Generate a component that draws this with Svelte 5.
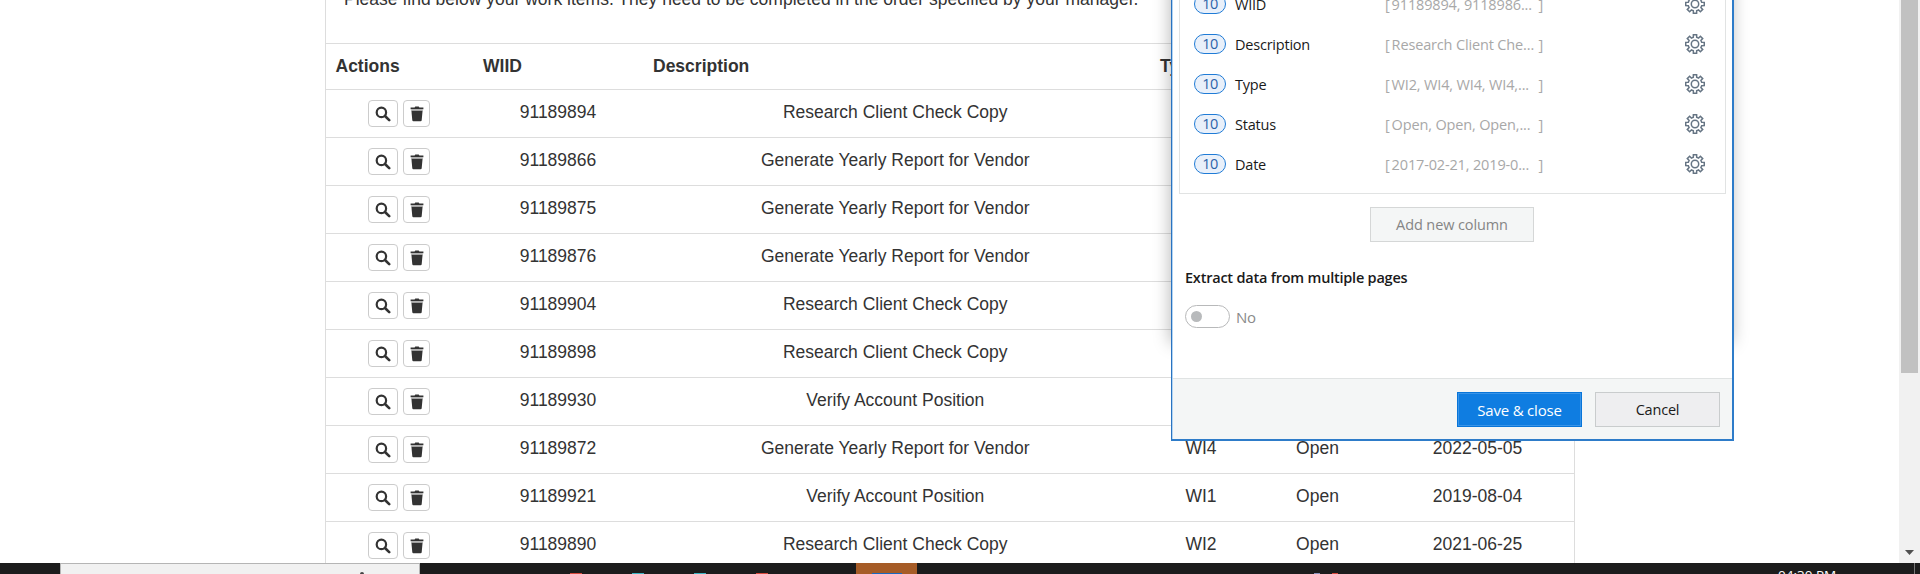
<script>
  const rows = [
    ['91189894', 'Research Client Check Copy', 'WI2', 'Open', '2017-02-21'],
    ['91189866', 'Generate Yearly Report for Vendor', 'WI4', 'Open', '2019-08-04'],
    ['91189875', 'Generate Yearly Report for Vendor', 'WI4', 'Open', '2019-08-04'],
    ['91189876', 'Generate Yearly Report for Vendor', 'WI4', 'Open', '2019-08-04'],
    ['91189904', 'Research Client Check Copy', 'WI2', 'Open', '2019-08-04'],
    ['91189898', 'Research Client Check Copy', 'WI2', 'Open', '2019-08-04'],
    ['91189930', 'Verify Account Position', 'WI1', 'Open', '2019-08-04'],
    ['91189872', 'Generate Yearly Report for Vendor', 'WI4', 'Open', '2022-05-05'],
    ['91189921', 'Verify Account Position', 'WI1', 'Open', '2019-08-04'],
    ['91189890', 'Research Client Check Copy', 'WI2', 'Open', '2021-06-25']
  ].map((cells, i) => ({ cells, covered: i < 7 }));

  const columns = [
    ['WIID', '91189894, 9118986...'],
    ['Description', 'Research Client Che...'],
    ['Type', 'WI2, WI4, WI4, WI4,...'],
    ['Status', 'Open, Open, Open,...'],
    ['Date', '2017-02-21, 2019-0...']
  ];

  const polar = (r, deg) => {
    const a = (deg * Math.PI) / 180;
    return `${(10 + r * Math.sin(a)).toFixed(2)} ${(10 - r * Math.cos(a)).toFixed(2)}`;
  };
  const gear =
    'M' +
    Array.from({ length: 8 }, (_, i) => {
      const c = i * 45;
      return [polar(6.9, c - 14), polar(9.4, c - 10), polar(9.4, c + 10), polar(6.9, c + 14)].join('L');
    }).join('L') +
    'Z';
</script>

<div class="screen">
  <div class="view">
    <main>
      <p class="intro">Please find below your work items. They need to be completed in the order specified by your manager.</p>
      <div class="row head">
        <span>Actions</span><span>WIID</span><span>Description</span><span>Type</span>
      </div>
      {#each rows as { cells, covered }}
        <div class="row">
          <div class="actions">
            <button class="find" aria-label="View">
              <svg width="16" height="16" viewBox="0 0 16 16"><circle cx="6.4" cy="6.4" r="4.7" fill="none" stroke="#333" stroke-width="2.2" /><path d="M10 10l4.2 4.2" stroke="#333" stroke-width="2.6" stroke-linecap="round" /></svg>
            </button>
            <button class="bin" aria-label="Delete">
              <svg width="14" height="16" viewBox="0 0 14 16"><path d="M.6 1.6h4L5.3.6h3.4l.7 1h4v1.7H.6z" fill="#333" /><path d="M1.4 4.6h11.2l-.9 9.7q-.1 1-1.1 1H3.4q-1 0-1.1-1z" fill="#333" /><path d="M1.3 3.3h11.4v1.3H1.3z" fill="#aaa" /></svg>
            </button>
          </div>
          {#each covered ? cells.slice(0, 2) : cells as cell}
            <div class="cell">{cell}</div>
          {/each}
        </div>
      {/each}
    </main>
    <div class="scroll">
      <div class="thumb"></div>
      <svg width="9" height="5" viewBox="0 0 9 5"><path d="M0 0h9L4.5 5z" fill="#505050" /></svg>
    </div>
  </div>

  <footer class="taskbar">
    <div class="search"><i></i></div>
    <div class="task"><i></i></div>
    <svg class="tips" width="1060" height="11" viewBox="0 0 1060 11">
      <g fill="#d9493d"><path d="M150 10h12v1h-12zM336 10h12v1h-12zM912 10h6v1h-6z" /></g>
      <path d="M212 10h12v1h-12zM274 10h12v1h-12z" fill="#3bb4c4" />
      <path d="M894 10h6v1h-6z" fill="#8992bd" />
    </svg>
    <span class="clock">04:30 PM</span>
    <span class="edge"></span>
  </footer>

  <div class="under"></div>
  <section class="dialog">
    <div class="list">
      {#each columns as [name, sample]}
        <div class="item">
          <span class="badge">10</span>
          <span class="name">{name}</span>
          <span class="sample"><span>[</span><span class="txt">{sample}</span><span>]</span></span>
          <svg width="20" height="20" viewBox="0 0 20 20" fill="none" stroke="#667584" stroke-width="1.5"><path d={gear} /><circle cx="10" cy="10" r="3.7" /></svg>
        </div>
      {/each}
    </div>
    <button class="add">Add new column</button>
    <h2>Extract data from multiple pages</h2>
    <div class="toggle"><span class="track"><i></i></span><span class="no">No</span></div>
    <div class="foot">
      <button class="save">Save &amp; close</button>
      <button class="cancel">Cancel</button>
    </div>
  </section>
</div>

<style>
  :global(body) { margin: 0; overflow: hidden; }
  * { box-sizing: border-box; }
  button { margin: 0; padding: 0; font: inherit; }
  svg { display: block; }
  .screen { position: relative; width: 1920px; height: 574px; overflow: hidden; background: #fff; display: flex; flex-direction: column; font-family: "Open Sans", "Noto Sans", sans-serif; }
  .view { height: 563px; display: flex; overflow: hidden; }
  main { width: 1250px; height: 620px; margin-left: 325px; border: solid #ddd; border-width: 0 1px; font: 17.5px/24px "Liberation Sans", Arial, sans-serif; color: #333; }
  .intro { margin: -13px 0 0; height: 56px; padding-left: 18px; letter-spacing: .01px; white-space: nowrap; }
  .row { display: grid; grid-template-columns: 149px 170px 507px 102px 131px 189px; height: 48px; border-top: 1px solid #ddd; }
  .head { height: 46px; font-weight: 700; line-height: 45px; }
  .head span { padding-left: 8px; }
  .head span:first-child { padding-left: 9.5px; }
  .cell { text-align: center; padding-right: 4px; line-height: 44px; white-space: nowrap; }
  .cell:nth-child(3) { padding-right: 6.5px; }
  .actions { display: flex; gap: 5px; padding: 10px 0 0 42px; }
  .actions button { height: 27px; border: 1px solid #ccc; border-radius: 4px; background: #fff; display: flex; align-items: center; justify-content: center; }
  .find { width: 30px; }
  .bin { width: 27px; }
  .scroll { margin-left: auto; width: 21px; height: 563px; background: #f1f1f1; display: flex; flex-direction: column; align-items: center; justify-content: space-between; padding-bottom: 8px; }
  .thumb { width: 17px; height: 373px; background: #c1c1c1; }
  .taskbar { height: 11px; background: #1c1c1c; display: flex; overflow: hidden; position: relative; }
  .search { width: 360px; height: 11px; flex: none; margin-left: 60px; background: #f1f1f1; border: solid #b5b5b5; border-width: 1px 1px 0; display: flex; }
  .search i { width: 4px; height: 6px; margin: 8px 0 0 299px; border-radius: 2px; background: #444; }
  .task { width: 61px; height: 11px; flex: none; margin-left: 436px; background: #a65c27; display: flex; justify-content: center; align-items: flex-start; }
  .task i { width: 30px; height: 1px; margin-top: 10px; background: #1769c0; }
  .tips { position: absolute; left: 420px; top: 0; }
  .clock { margin: 3px 0 0 861px; width: 60px; height: 18px; font-size: 13.5px; line-height: 18px; color: #fff; white-space: nowrap; }
  .edge { width: 1px; height: 11px; margin-left: 76px; background: #777; }
  .under { position: absolute; left: 1171px; top: -80px; width: 560px; height: 422px; box-shadow: 0 0 16px 1px rgba(0, 0, 0, .28); }
  .dialog { position: absolute; left: 1171px; top: -40px; width: 563px; height: 481px; background: #fff; border: 2px solid #2e7cc9; border-left: 1px solid #2a73c0; box-shadow: inset 1px 0 #b3d4f2; display: flex; flex-direction: column; font-size: 15px; color: #1a1a1a; }
  .list { width: 547px; height: 232px; flex: none; margin-left: 7px; border: solid #e1e3e3; border-width: 0 1px 1px; padding: 22px 20px 0 14px; }
  .item { height: 40px; display: grid; grid-template-columns: 41px 150px 160px 1fr; align-items: center; }
  .item svg { justify-self: end; }
  .badge { width: 32px; height: 20px; border: 1px solid #1f7bd6; border-radius: 10px; background: #e9f0fa; color: #2d63a8; font-size: 14.5px; line-height: 18px; text-align: center; letter-spacing: -.5px; }
  .name { color: #1a1a1a; font-size: 14.5px; letter-spacing: -.22px; }
  .sample { display: flex; color: #a8a8a8; font-size: 14.5px; letter-spacing: -.15px; white-space: nowrap; gap: 2px; }
  .txt { width: 145px; }
  .add { align-self: flex-start; width: 164px; height: 35px; flex: none; margin: 13px 0 0 198px; background: #f4f6f6; border: 1px solid #d5d7d7; color: #858585; font-size: 14.5px; letter-spacing: -.1px; }
  h2 { margin: 24px 0 0 13px; height: 24px; flex: none; font-size: 14.5px; line-height: 24px; font-weight: 600; letter-spacing: -.22px; }
  .toggle { display: flex; align-items: center; margin: 15px 0 0 13px; height: 23px; gap: 6px; color: #8a8a8a; letter-spacing: -.3px; }
  .track { width: 45px; height: 23px; border: 1px solid #b8b9ba; border-radius: 12px; padding: 5px; }
  .track i { display: block; width: 11px; height: 11px; border-radius: 50%; background: #b8babc; }
  .foot { margin: auto 0 0 1px; height: 61px; flex: none; background: #f4f6f6; border-top: 1px solid #e0e3e3; display: flex; justify-content: flex-end; gap: 13px; padding: 13px 12px 0 0; }
  .foot button { width: 125px; height: 35px; font-size: 15px; letter-spacing: -.2px; }
  .foot .save { background: #0f7de1; color: #fff; border: 1px solid #0875d9; box-shadow: inset 0 0 0 1px #3994e8; }
  .foot .cancel { background: #eeeef0; border: 1px solid #c9cccd; color: #1a1a1a; font-size: 14.5px; }
</style>
